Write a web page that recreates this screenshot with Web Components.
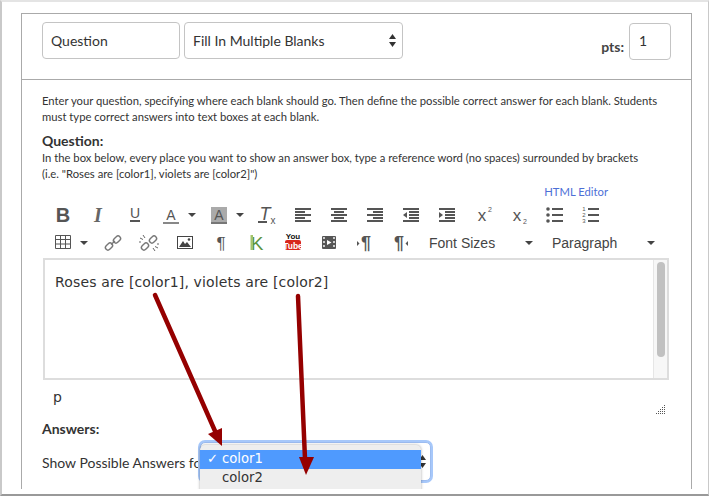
<!DOCTYPE html>
<html>
<head>
<meta charset="utf-8">
<title>Fill In Multiple Blanks</title>
<style>
  html, body { margin: 0; padding: 0; background: #fff; }
</style>
</head>
<body>
<quiz-shot>
  <quiz-header></quiz-header>
  <quiz-intro></quiz-intro>
  <editor-toolbar></editor-toolbar>
  <rich-editor>Roses are [color1], violets are [color2]</rich-editor>
  <answer-picker></answer-picker>
</quiz-shot>

<script>
// icons, all drawn in a 36x28 box
const TXT = 'font-family="Liberation Sans, sans-serif" fill="#555" text-anchor="middle"';
const lines = (rows) => rows.map(([x, y, w]) => `<rect x="${x}" y="${y}" width="${w}" height="2" fill="#555"/>`).join('');
const ICONS = {
  bold: `<text x="18" y="21" font-size="20" font-weight="700" ${TXT}>B</text>`,
  italic: `<text x="17" y="21" font-size="20" font-weight="700" font-style="italic" font-family="Liberation Serif, serif" fill="#666" text-anchor="middle">I</text>`,
  underline: `<text x="18" y="17" font-size="14" ${TXT}>U</text><rect x="13" y="19" width="10" height="2" fill="#555"/>`,
  color: `<text x="18" y="19" font-size="14" ${TXT}>A</text><rect x="10" y="21" width="16" height="2" fill="#888"/>`,
  background: `<rect x="10" y="6" width="16" height="17" fill="#aaa"/><text x="18" y="19" font-size="14" ${TXT}>A</text><rect x="10" y="21" width="16" height="2" fill="#777"/>`,
  clear: `<text x="16" y="19" font-size="18" font-style="italic" ${TXT}>T</text><rect x="9" y="20" width="9" height="2" fill="#555"/><text x="24" y="23" font-size="10" ${TXT}>x</text>`,
  alignleft: lines([[10,7,16],[10,10,10],[10,13,16],[10,16,10],[10,19,16]]),
  aligncenter: lines([[10,7,16],[13,10,10],[10,13,16],[13,16,10],[10,19,16]]),
  alignright: lines([[10,7,16],[16,10,10],[10,13,16],[16,16,10],[10,19,16]]),
  outdent: lines([[10,7,16],[16,10,10],[16,13,10],[16,16,10],[10,19,16]]) + `<polygon points="14,11 14,17 10,14" fill="#555"/>`,
  indent: lines([[10,7,16],[16,10,10],[16,13,10],[16,16,10],[10,19,16]]) + `<polygon points="10,11 10,17 14,14" fill="#555"/>`,
  sup: `<text x="17" y="20" font-size="17" ${TXT}>x</text><text x="25" y="11" font-size="7" ${TXT}>2</text>`,
  sub: `<text x="16" y="20" font-size="17" ${TXT}>x</text><text x="24" y="23" font-size="7" ${TXT}>2</text>`,
  bullets: `<circle cx="11" cy="8" r="1.800" fill="#555"/><circle cx="11" cy="14" r="1.800" fill="#555"/><circle cx="11" cy="20" r="1.800" fill="#555"/>` + lines([[15,7,11],[15,13,11],[15,19,11]]),
  numbers: `<text x="11" y="10" font-size="6" ${TXT}>1</text><text x="11" y="16" font-size="6" ${TXT}>2</text><text x="11" y="22" font-size="6" ${TXT}>3</text>` + lines([[15,7,11],[15,13,11],[15,19,11]]),
  table: `<path d="M10.5 6.500h15v13h-15zM10.500 10.500h15M10.500 15h15M15.500 6.500v13M20.500 6.500v13" fill="none" stroke="#555"/>`,
  link: `<g fill="none" stroke="#777" stroke-width="1.400"><rect x="10" y="15" width="8" height="5" rx="2.500" transform="rotate(-45 14 17.500)"/><rect x="18" y="8" width="8" height="5" rx="2.500" transform="rotate(-45 22 10.500)"/><path d="M16 15.500l4-3.500"/></g>`,
  unlink: `<g fill="none" stroke="#777" stroke-width="1.400"><rect x="10" y="15" width="8" height="5" rx="2.500" transform="rotate(-45 14 17.500)"/><rect x="18" y="8" width="8" height="5" rx="2.500" transform="rotate(-45 22 10.500)"/></g><path d="M12 6l2 3M9 9l3 1.500M24 22l-2-3M27 19l-3-1.500M8 13h2M28 15h-2" stroke="#666" fill="none"/>`,
  image: `<rect x="10.500" y="7.500" width="15" height="12" fill="none" stroke="#444"/><polygon points="12,18 16,12 18,15 20,13 24,18" fill="#444"/><circle cx="22" cy="10.500" r="1.300" fill="#444"/>`,
  para: `<text x="18" y="20" font-size="17" ${TXT}>¶</text>`,
  kaltura: `<text x="18" y="21" font-size="19" font-family="Liberation Sans, sans-serif" fill="#5a9440" text-anchor="middle">K</text><rect x="11.500" y="6" width="2.500" height="15" fill="#a3c46a"/>`,
  youtube: `<text x="18" y="10" font-size="8" font-weight="700" font-family="Liberation Sans, sans-serif" fill="#111" text-anchor="middle">You</text><rect x="10" y="11" width="16" height="10" rx="2" fill="#d8261c"/><text x="18" y="19.500" font-size="8.500" font-weight="700" font-family="Liberation Sans, sans-serif" fill="#fff" text-anchor="middle">Tube</text>`,
  media: `<rect x="11" y="7" width="14" height="13" rx="1" fill="#555"/><rect x="12" y="8" width="2" height="2" fill="#ccc"/><rect x="12" y="12" width="2" height="2" fill="#ccc"/><rect x="12" y="16" width="2" height="2" fill="#ccc"/><rect x="22" y="8" width="2" height="2" fill="#ccc"/><rect x="22" y="12" width="2" height="2" fill="#ccc"/><rect x="22" y="16" width="2" height="2" fill="#ccc"/><polygon points="16,11 20.500,13.500 16,16" fill="#fff"/>`,
  ltr: `<polygon points="10,12 10,17 12.500,14.500" fill="#555"/><text x="19" y="20" font-size="18" font-weight="700" ${TXT}>¶</text>`,
  rtl: `<text x="16" y="20" font-size="18" font-weight="700" ${TXT}>¶</text><polygon points="25,12 25,17 22.500,14.500" fill="#555"/>`,
  caret: `<polygon points="0,0 8,0 4,4" fill="#444"/>`
};

class ToolBtn extends HTMLElement {
  connectedCallback() {
    const root = this.attachShadow({ mode: 'open' });
    root.innerHTML = `<style>
      :host { display: flex; align-items: center; width: 36px; height: 28px; flex: none; }
      :host([caret]) { width: 48px; }
      :host([wide]) { width: 50px; }
      svg.i { width: 36px; height: 28px; flex: none; }
      svg.c { width: 8px; height: 4px; flex: none; margin-left: -1px; }
    </style>
    <svg class="i" viewBox="0 0 36 28">${ICONS[this.getAttribute('icon')]}</svg>
    ${this.hasAttribute('caret') || this.hasAttribute('wide') ? `<svg class="c" viewBox="0 0 8 4">${ICONS.caret}</svg>` : ''}`;
  }
}
customElements.define('tool-btn', ToolBtn);

class QuizShot extends HTMLElement {
  constructor() {
    super();
    this.attachShadow({ mode: 'open' }).innerHTML = `<style>
      :host {
        display: block; box-sizing: border-box; width: 709px; height: 496px; overflow: hidden;
        padding: 11px 18px 0 19px;
        border: solid #c9c9c9; border-width: 2px 1px 2px 2px;
        border-bottom-color: #999; border-top-color: #e4e4e4;
        background: #fff; color: #333;
        font-family: Lato, sans-serif;
      }
      .frame {
        box-sizing: border-box; width: 671px; height: 476px;
        border: 1px solid #aaa; border-width: 1px 1px 0 1px;
        overflow: hidden; position: relative;
      }
    </style><div class="frame"><slot></slot></div>`;
  }
}
customElements.define('quiz-shot', QuizShot);

class QuizHeader extends HTMLElement {
  constructor() {
    super();
    this.attachShadow({ mode: 'open' }).innerHTML = `<style>
      :host {
        display: flex; box-sizing: border-box; height: 66px; padding: 8px 20px 0 20px;
        border-bottom: 1px solid #aaa; gap: 4px; font-size: 14px;
      }
      .field {
        box-sizing: border-box; height: 37px; border: 1px solid #c4c4c4; border-radius: 4px;
        display: flex; align-items: center; padding-left: 8px; background: #fff;
      }
      .name { width: 138px; }
      .kind { width: 219px; justify-content: space-between; padding-right: 6px; }
      .pts { margin-left: auto; display: flex; gap: 5px; height: 38px; padding-top: 1px; color: #444; }
      .pts span { align-self: center; font-weight: 700; padding-top: 8px; margin-left: -1px; }
      .num { width: 42px; padding-left: 9px; padding-bottom: 2px; color: #333; }
      svg { width: 7px; height: 13px; }
    </style>
    <div class="field name">Question</div>
    <div class="field kind">Fill In Multiple Blanks
      <svg viewBox="0 0 7 13"><polygon points="3.500,0 7,5 0,5" fill="#333"/><polygon points="0,8 7,8 3.500,13" fill="#333"/></svg>
    </div>
    <div class="pts"><span>pts:</span><div class="field num">1</div></div>`;
  }
}
customElements.define('quiz-header', QuizHeader);

class QuizIntro extends HTMLElement {
  constructor() {
    super();
    this.attachShadow({ mode: 'open' }).innerHTML = `<style>
      :host { display: block; padding: 13px 20px 0 20px; font-size: 11.25px; line-height: 16px; color: #333; }
      p { margin: 0; }
      h4 { margin: 6px 0 0; font-size: 14px; line-height: 19px; font-weight: 700; color: #333; }
      .html { display: block; text-align: right; margin: 2px 63px 0 0; color: #4d6fd6; font-size: 11.25px; }
    </style>
    <p>Enter your question, specifying where each blank should go. Then define the possible correct answer for each blank. Students must type correct answers into text boxes at each blank.</p>
    <h4>Question:</h4>
    <p>In the box below, every place you want to show an answer box, type a reference word (no spaces) surrounded by brackets<br>(i.e. "Roses are [color1], violets are [color2]")</p>
    <span class="html">HTML Editor</span>`;
  }
}
customElements.define('quiz-intro', QuizIntro);

class EditorToolbar extends HTMLElement {
  constructor() {
    super();
    this.attachShadow({ mode: 'open' }).innerHTML = `<style>
      :host { display: block; padding: 1px 0 1px 23px; font-family: "Liberation Sans", sans-serif; font-size: 14px; color: #444; }
      .row { display: flex; height: 28px; align-items: center; }
      .drop { display: flex; align-items: center; justify-content: space-between; flex: none; }
      .sizes { width: 104px; margin-left: 10px; }
      .blocks { width: 103px; margin-left: 19px; }
      svg { width: 8px; height: 4px; }
    </style>
    <div class="row">
      <tool-btn icon="bold"></tool-btn><tool-btn icon="italic"></tool-btn><tool-btn icon="underline"></tool-btn>
      <tool-btn icon="color" caret></tool-btn><tool-btn icon="background" caret></tool-btn><tool-btn icon="clear"></tool-btn>
      <tool-btn icon="alignleft"></tool-btn><tool-btn icon="aligncenter"></tool-btn><tool-btn icon="alignright"></tool-btn>
      <tool-btn icon="outdent"></tool-btn><tool-btn icon="indent"></tool-btn><tool-btn icon="sup"></tool-btn>
      <tool-btn icon="sub"></tool-btn><tool-btn icon="bullets"></tool-btn><tool-btn icon="numbers"></tool-btn>
    </div>
    <div class="row">
      <tool-btn icon="table" wide></tool-btn>
      <tool-btn icon="link"></tool-btn><tool-btn icon="unlink"></tool-btn><tool-btn icon="image"></tool-btn>
      <tool-btn icon="para"></tool-btn><tool-btn icon="kaltura"></tool-btn><tool-btn icon="youtube"></tool-btn>
      <tool-btn icon="media"></tool-btn><tool-btn icon="ltr"></tool-btn><tool-btn icon="rtl"></tool-btn>
      <div class="drop sizes">Font Sizes<svg viewBox="0 0 8 4">${ICONS.caret}</svg></div>
      <div class="drop blocks">Paragraph<svg viewBox="0 0 8 4">${ICONS.caret}</svg></div>
    </div>`;
  }
}
customElements.define('editor-toolbar', EditorToolbar);

class RichEditor extends HTMLElement {
  constructor() {
    super();
    this.attachShadow({ mode: 'open' }).innerHTML = `<style>
      :host { display: block; padding-left: 21px; }
      .box {
        box-sizing: border-box; width: 626px; height: 122px; border: 2px solid #ddd;
        display: flex; font-family: "DejaVu Sans", sans-serif; font-size: 14px; color: #333;
      }
      .text { flex: 1; padding: 12px 10px 0 10px; line-height: 20px; letter-spacing: 0.15px; }
      .bar {
        box-sizing: border-box; width: 14px; border-left: 1px solid #e6e6e6; background: #f7f7f7;
        padding: 2px 2px 0 3px;
      }
      .thumb { height: 95px; border-radius: 4px; background: #c1c1c1; }
      .status {
        width: 626px; height: 40px; box-sizing: border-box; padding: 9px 0 0 10px;
        display: flex; justify-content: space-between; font-family: "DejaVu Sans", sans-serif; font-size: 14px;
      }
      .status svg { width: 10px; height: 10px; margin: 16px 3px 0 0; }
    </style>
    <div class="box"><div class="text"><slot></slot></div><div class="bar"><div class="thumb"></div></div></div>
    <div class="status">p
      <svg viewBox="0 0 10 10" fill="#555">
        <rect x="8" y="0" width="1" height="1"/><rect x="6" y="2" width="1" height="1"/><rect x="8" y="2" width="1" height="1"/>
        <rect x="4" y="4" width="1" height="1"/><rect x="6" y="4" width="1" height="1"/><rect x="8" y="4" width="1" height="1"/>
        <rect x="2" y="6" width="1" height="1"/><rect x="4" y="6" width="1" height="1"/><rect x="6" y="6" width="1" height="1"/><rect x="8" y="6" width="1" height="1"/>
        <rect x="0" y="8" width="1" height="1"/><rect x="2" y="8" width="1" height="1"/><rect x="4" y="8" width="1" height="1"/><rect x="6" y="8" width="1" height="1"/><rect x="8" y="8" width="1" height="1"/>
      </svg>
    </div>`;
  }
}
customElements.define('rich-editor', RichEditor);

class AnswerPicker extends HTMLElement {
  constructor() {
    super();
    this.attachShadow({ mode: 'open' }).innerHTML = `<style>
      :host { display: block; padding-left: 20px; font-size: 14px; color: #333; }
      h4 { margin: 0; font-size: 14px; line-height: 18px; font-weight: 700; }
      .row { display: flex; align-items: center; height: 48px; margin-top: 0; position: relative; }
      .label { width: 158px; white-space: nowrap; }
      .select {
        box-sizing: border-box; width: 231px; height: 39px; margin-top: -1px; border-radius: 5px;
        border: 1px solid #9cbcf0; box-shadow: 0 0 0 2px #a7c8fa; background: #fff;
        display: flex; align-items: center; justify-content: flex-end; padding-right: 4px;
      }
      .select svg { width: 7px; height: 13px; }
      .menu {
        position: absolute; left: 158px; top: 7px; width: 221px; height: 60px; box-sizing: border-box;
        padding-top: 5px; background: #eee; border-radius: 5px; overflow: hidden;
        box-shadow: 0 0 3px rgba(0,0,0,.35);
        font-family: "DejaVu Sans", sans-serif; font-size: 13.2px;
      }
      .opt { height: 19px; line-height: 18px; padding-left: 22px; position: relative; color: #333; }
      .opt.on { background: #4f9afe; color: #fff; }
      .check { position: absolute; left: 7px; top: 0; font-weight: 700; }
    </style>
    <h4>Answers:</h4>
    <div class="row">
      <div class="label">Show Possible Answers for:</div>
      <div class="select"><svg viewBox="0 0 7 13"><polygon points="3.500,0 7,5 0,5" fill="#333"/><polygon points="0,8 7,8 3.500,13" fill="#333"/></svg></div>
      <div class="menu">
        <div class="opt on"><span class="check">✓</span>color1</div>
        <div class="opt">color2</div>
      </div>
    </div>
    <svg-arrows></svg-arrows>`;
  }
}
customElements.define('answer-picker', AnswerPicker);

// red annotation arrows lying over the whole shot
class SvgArrows extends HTMLElement {
  constructor() {
    super();
    this.attachShadow({ mode: 'open' }).innerHTML = `<style>
      :host { position: fixed; left: 0; top: 0; width: 709px; height: 489px; pointer-events: none; overflow: hidden; }
      svg { display: block; }
    </style>
    <svg width="709" height="489" viewBox="0 0 709 489">
      <g fill="#950000" stroke="none">
        <path d="M155 295L215 431" stroke="#950000" stroke-width="4.500" stroke-linecap="round" fill="none"/>
        <polygon points="222,446 208,434 222,428"/>
        <path d="M298 296L305 459" stroke="#950000" stroke-width="4.500" stroke-linecap="round" fill="none"/>
        <polygon points="306,475 299,457 314,457"/>
      </g>
    </svg>`;
  }
}
customElements.define('svg-arrows', SvgArrows);
</script>
</body>
</html>
